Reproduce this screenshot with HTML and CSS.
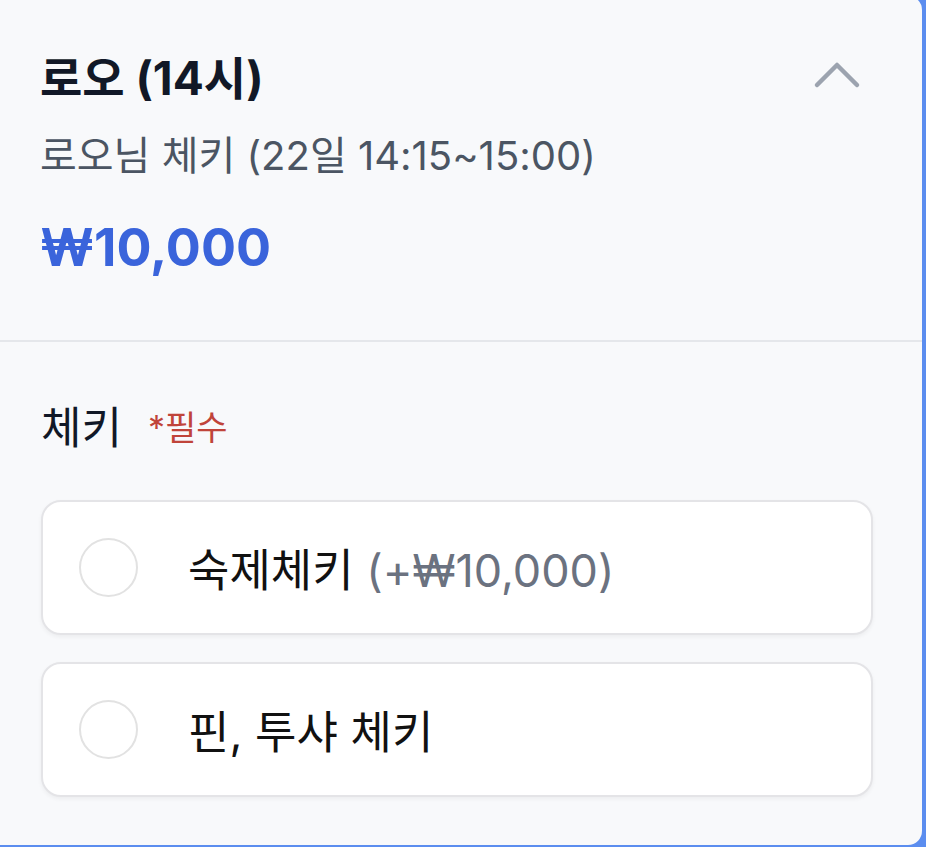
FILE: index.html
```html
<!DOCTYPE html>
<html lang="ko">
<head>
<meta charset="utf-8">
<link rel="stylesheet" href="styles.css">
</head>
<body>
<div class="card">
  <div class="head">
    <div class="title-row">
      <div class="title">로오 (14시)</div>
      <svg class="chev" width="48" height="30" viewBox="0 0 48 30"><polyline points="4,25 24,5 44,25" fill="none" stroke="#9ca3af" stroke-width="4.5" stroke-linecap="round" stroke-linejoin="round"/></svg>
    </div>
    <div class="sub">로오님 체키 (22일 14:15~15:00)</div>
    <div class="price">₩10,000</div>
  </div>
  <div class="body">
    <div class="label">체키 <span class="req">*필수</span></div>
    <div class="options">
      <div class="opt"><span class="radio"></span><span class="opt-text">숙제체키 <span class="extra">(+₩10,000)</span></span></div>
      <div class="opt"><span class="radio"></span><span class="opt-text">핀, 투샤 체키</span></div>
    </div>
  </div>
</div>
</body>
</html>
```
FILE: styles.css
```css
html, body { margin: 0; padding: 0; }
body {
  background: #5b8def;
  font-family: "Inter", "Noto Sans CJK KR", sans-serif;
  width: 926px;
  height: 847px;
  overflow: hidden;
}
.card {
  width: 922px;
  height: 849px;
  margin-top: -4px;
  background: #f8f9fb;
  border-radius: 0 14px 14px 0;
  box-sizing: border-box;
}
.head {
  padding: 58px 64px 62px 40px;
  border-bottom: 2px solid #e5e7eb;
}
.title-row {
  display: flex;
  justify-content: space-between;
  align-items: center;
  height: 48px;
}
.title {
  font-size: 46px;
  font-weight: 700;
  line-height: 48px;
  color: #111827;
}
.chev { margin-right: -3px; margin-top: -6px; }
.sub {
  margin-top: 32px;
  font-size: 40px;
  line-height: 44px;
  color: #4b5563;
}
.price {
  margin-top: 40px;
  font-size: 52px;
  line-height: 60px;
  font-weight: 700;
  color: #3a64db;
}
.body {
  padding: 62px 0 0 41px;
}
.label {
  font-size: 44px;
  line-height: 48px;
  color: #111827;
  display: flex;
  align-items: center;
  gap: 26px;
}
.req {
  font-size: 34px;
  color: #c0443a;
}
.options {
  margin-top: 48px;
  display: flex;
  flex-direction: column;
  gap: 27px;
  width: 832px;
}
.opt {
  height: 135px;
  box-sizing: border-box;
  background: #fff;
  border: 2px solid #e4e4e7;
  border-radius: 20px;
  box-shadow: 0 2px 4px rgba(0,0,0,0.05);
  display: flex;
  align-items: center;
  padding-left: 36px;
  gap: 50px;
}
.radio {
  width: 59px;
  height: 59px;
  box-sizing: border-box;
  border: 2px solid #e2e2e2;
  border-radius: 50%;
  flex: none;
}
.opt-text {
  font-size: 45px;
  color: #111;
}
.extra { color: #6b7280; }
```
